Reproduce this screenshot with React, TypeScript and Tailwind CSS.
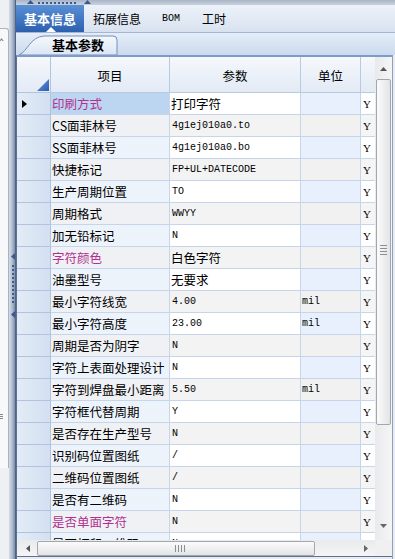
import React from "react";
import type { FC } from "react";

type Row = { name: string; value: string; unit?: string; hot?: boolean };

// 参数表的数据
const rows: Row[] = [
  { name: "印刷方式", value: "打印字符", hot: true },
  { name: "CS面菲林号", value: "4g1ej010a0.to" },
  { name: "SS面菲林号", value: "4g1ej010a0.bo" },
  { name: "快捷标记", value: "FP+UL+DATECODE" },
  { name: "生产周期位置", value: "TO" },
  { name: "周期格式", value: "WWYY" },
  { name: "加无铅标记", value: "N" },
  { name: "字符颜色", value: "白色字符", hot: true },
  { name: "油墨型号", value: "无要求" },
  { name: "最小字符线宽", value: "4.00", unit: "mil" },
  { name: "最小字符高度", value: "23.00", unit: "mil" },
  { name: "周期是否为阴字", value: "N" },
  { name: "字符上表面处理设计", value: "N" },
  { name: "字符到焊盘最小距离", value: "5.50", unit: "mil" },
  { name: "字符框代替周期", value: "Y" },
  { name: "是否存在生产型号", value: "N" },
  { name: "识别码位置图纸", value: "/" },
  { name: "二维码位置图纸", value: "/" },
  { name: "是否有二维码", value: "N" },
  { name: "是否单面字符", value: "N", hot: true },
  { name: "是否打印二维码", value: "N" },
];

const isAscii = (s: string) => /^[\x00-\x7f]+$/.test(s);

const Tri: FC<{ dir: "up" | "down" | "left" | "right"; color?: string }> = ({
  dir,
  color = "#555",
}) => {
  const d = {
    up: "M0 4 L3.5 0 L7 4 Z",
    down: "M0 0 L7 0 L3.5 4 Z",
    left: "M4 0 L4 7 L0 3.5 Z",
    right: "M0 0 L4 3.5 L0 7 Z",
  }[dir];
  const w = dir === "up" || dir === "down" ? 7 : 4;
  const h = dir === "up" || dir === "down" ? 4 : 7;
  return (
    <svg width={w} height={h} viewBox={`0 0 ${w} ${h}`}>
      <path d={d} fill={color} />
    </svg>
  );
};

const GridRow: FC<{ row: Row; index: number }> = ({ row, index }) => {
  const odd = index % 2 === 0;
  const selected = index === 0;
  return (
    <div className="flex h-[22px] shrink-0">
      <div className="w-[34px] shrink-0 bg-gradient-to-r from-[#e3ecf7] to-[#d3e0f1] border-r border-b border-[#b2c4dd] flex items-center pl-[5px]">
        {selected && (
          <svg width="5" height="8" viewBox="0 0 5 8">
            <path d="M0 0 L5 4 L0 8 Z" fill="#000" />
          </svg>
        )}
      </div>
      <div
        className={`w-[119px] shrink-0 border-r border-b border-[#c6d5ea] flex items-center pl-[1px] pt-[1px] text-[12.5px] leading-none whitespace-nowrap overflow-hidden ${
          selected ? "bg-[#bcd5f1]" : odd ? "bg-[#edf3fb]" : "bg-[#eff1f4]"
        } ${row.hot ? "text-[#b2308f]" : "text-black"}`}
      >
        {row.name}
      </div>
      <div
        className={`w-[131px] shrink-0 border-r border-b border-[#c6d5ea] flex items-center pl-[1px] pt-[1px] leading-none whitespace-nowrap overflow-hidden text-black ${
          odd ? "bg-white" : "bg-[#f3f3f3]"
        } ${
          isAscii(row.value)
            ? "font-['Liberation_Mono',monospace] text-[10px] pl-[2px]"
            : "text-[12.5px]"
        }`}
      >
        {row.value}
      </div>
      <div
        className={`w-[60px] shrink-0 border-r border-b border-[#c6d5ea] flex items-center pl-[1px] pt-[1px] font-['Liberation_Mono',monospace] text-[10px] leading-none ${
          odd ? "bg-[#e7f0fc]" : "bg-[#f1f1f1]"
        }`}
      >
        {row.unit}
      </div>
      <div
        className={`w-[14px] shrink-0 border-b border-[#c6d5ea] flex items-center pl-[2px] pt-[1px] font-['Liberation_Serif',serif] text-[11px] leading-none ${
          odd ? "bg-white" : "bg-[#f5f5f5]"
        }`}
      >
        Y
      </div>
    </div>
  );
};

export default function App() {
  return (
    <div className="w-[395px] h-[559px] flex overflow-hidden bg-[#eef1f5] font-['Noto_Sans_CJK_SC','Noto_Sans',sans-serif] select-none">
      {/* 左侧折叠面板 */}
      <div className="w-[9px] shrink-0 flex flex-col bg-[#eef0f3]">
        <div className="h-[28px]" />
        <div className="h-[440px] bg-[#f7f8fa] border-t border-r border-[#a9b3c2] rounded-tr-[3px] relative">
          <div className="absolute left-0 top-[10px] w-[3px] h-[3px] border-t border-r border-[#777] rotate-[-45deg]" />
          <div className="absolute left-0 top-[385px] flex flex-col gap-[1px]">
            <div className="w-[3px] h-px bg-[#888]" />
            <div className="w-[3px] h-px bg-[#888]" />
            <div className="w-[3px] h-px bg-[#888]" />
          </div>
        </div>
        <div className="flex-1" />
      </div>

      {/* 竖向分隔条 */}
      <div className="w-[7px] shrink-0 relative bg-gradient-to-r from-[#d5dce7] via-[#b4c0d2] to-[#7b8daa] border-r border-[#4f6486]">
        <div className="absolute left-[2px] top-[253px]">
          <Tri dir="left" color="#3b5a8c" />
        </div>
        <div className="absolute left-[3px] top-[265px] flex flex-col gap-[2px]">
          {Array.from({ length: 10 }).map((_, i) => (
            <div key={i} className="w-[2px] h-[2px] bg-[#3b5a8c]" />
          ))}
        </div>
        <div className="absolute left-[2px] top-[311px]">
          <Tri dir="left" color="#3b5a8c" />
        </div>
      </div>

      {/* 主区域 */}
      <div className="flex-1 flex flex-col min-w-0">
        {/* 顶部分隔条 */}
        <div className="h-[5px] shrink-0 relative bg-gradient-to-b from-[#a9b5c7] to-[#c9d2de]">
          <div className="absolute left-[11px] top-0">
            <Tri dir="up" color="#3b5a8c" />
          </div>
          <div className="absolute left-[22px] top-[2px] flex gap-[2px]">
            {Array.from({ length: 10 }).map((_, i) => (
              <div key={i} className="w-[2px] h-[2px] bg-[#3b5a8c]" />
            ))}
          </div>
          <div className="absolute left-[68px] top-0">
            <Tri dir="up" color="#3b5a8c" />
          </div>
        </div>

        {/* 页签栏 */}
        <div className="h-[28px] shrink-0 flex items-stretch bg-gradient-to-b from-[#edf2f9] to-[#d8e2ef] border-b border-[#a3b7d4]">
          <div className="w-[68px] relative flex items-center justify-center bg-gradient-to-b from-[#5a90d6] to-[#2c60ae] text-white text-[13px] font-bold">
            基本信息
            <div className="absolute bottom-0 left-[30px] w-0 h-0 border-l-[5px] border-r-[5px] border-b-[5px] border-l-transparent border-r-transparent border-b-white" />
          </div>
          <div className="pl-[9px] flex items-center text-[12px] text-black">拓展信息</div>
          <div className="pl-[21px] flex items-center font-['Liberation_Mono',monospace] text-[10px] text-black">BOM</div>
          <div className="pl-[22px] flex items-center text-[12px] text-black">工时</div>
        </div>

        {/* 子页签 */}
        <div className="h-[22px] shrink-0 relative bg-gradient-to-b from-[#e5edf8] to-[#cbdaee]">
          <svg className="absolute left-0 top-0" width="105" height="22" viewBox="0 0 105 22">
            <defs>
              <linearGradient id="tabg" x1="0" y1="0" x2="0" y2="1">
                <stop offset="0" stopColor="#f6f9fd" />
                <stop offset="1" stopColor="#dae5f4" />
              </linearGradient>
            </defs>
            <path
              d="M3 22 C12 18 14 4 28 3 L97 3 Q101 3 101 7 L101 22 Z"
              fill="url(#tabg)"
              stroke="#7390bd"
              strokeWidth="1"
            />
          </svg>
          <div className="absolute left-[36px] top-[2px] h-[20px] flex items-center text-[13px] font-bold text-black">
            基本参数
          </div>
        </div>

        {/* 表格 */}
        <div className="flex-1 flex min-h-0">
          <div className="flex-1 flex flex-col min-w-0 border-l border-t-2 border-[#7f9bc8] border-l-[#5c7196]">
            <div className="flex-1 flex min-h-0">
              <div className="flex-1 flex flex-col overflow-hidden">
                {/* 表头 */}
                <div className="flex h-[36px] shrink-0 bg-gradient-to-b from-[#f5f8fc] to-[#e2eaf5] text-[12.5px] text-black">
                  <div className="w-[34px] shrink-0 border-r border-b border-[#b2c4dd] flex items-end justify-end pr-[1px] pb-[1px]">
                    <svg width="12" height="12" viewBox="0 0 12 12">
                      <defs>
                        <linearGradient id="cg" x1="0" y1="0" x2="1" y2="1">
                          <stop offset="0" stopColor="#6c9be0" />
                          <stop offset="1" stopColor="#2a5cae" />
                        </linearGradient>
                      </defs>
                      <path d="M12 0 L12 12 L0 12 Z" fill="url(#cg)" />
                    </svg>
                  </div>
                  <div className="w-[119px] shrink-0 border-r border-b border-[#b9c9df] flex items-center justify-center pt-[3px]">项目</div>
                  <div className="w-[131px] shrink-0 border-r border-b border-[#b9c9df] flex items-center justify-center pt-[3px]">参数</div>
                  <div className="w-[60px] shrink-0 border-r border-b border-[#b9c9df] flex items-center justify-center pt-[3px]">单位</div>
                  <div className="w-[14px] shrink-0 border-b border-[#b9c9df]" />
                </div>
                {rows.map((r, i) => (
                  <GridRow key={r.name} row={r} index={i} />
                ))}
              </div>

              {/* 竖向滚动条 */}
              <div className="w-[17px] shrink-0 flex flex-col items-center bg-gradient-to-r from-[#e9eaec] to-[#f5f5f6]">
                <div className="h-[21px] flex items-center justify-center pt-[2px]">
                  <Tri dir="up" />
                </div>
                <div className="w-[15px] h-[346px] mt-[1px] rounded-[2px] border border-[#a2a7ae] bg-gradient-to-r from-[#fbfbfb] to-[#e3e4e6] flex flex-col items-center justify-center gap-[2px] pb-[4px]">
                  <div className="w-[7px] h-px bg-[#8a8f96]" />
                  <div className="w-[7px] h-px bg-[#8a8f96]" />
                  <div className="w-[7px] h-px bg-[#8a8f96]" />
                  <div className="w-[7px] h-px bg-[#8a8f96]" />
                </div>
                <div className="flex-1" />
                <div className="h-[16px] flex items-start justify-center">
                  <Tri dir="down" color="#666" />
                </div>
              </div>
            </div>

            {/* 横向滚动条 */}
            <div className="h-[16px] shrink-0 flex bg-gradient-to-b from-[#e9eaec] to-[#f5f5f6]">
              <div className="w-[358px] shrink-0 flex items-center">
                <div className="w-[20px] flex justify-center pl-[2px]">
                  <Tri dir="left" />
                </div>
                <div className="w-[278px] h-[15px] rounded-[2px] border border-[#a2a7ae] bg-gradient-to-b from-[#fbfbfb] to-[#e3e4e6] flex items-center justify-center gap-[2px] pl-[8px]">
                  <div className="w-px h-[7px] bg-[#8a8f96]" />
                  <div className="w-px h-[7px] bg-[#8a8f96]" />
                  <div className="w-px h-[7px] bg-[#8a8f96]" />
                  <div className="w-px h-[7px] bg-[#8a8f96]" />
                </div>
                <div className="flex-1 flex justify-end pr-[7px]">
                  <Tri dir="right" color="#666" />
                </div>
              </div>
              <div className="w-[17px] shrink-0 bg-[#f0f0f1]" />
            </div>
            <div className="h-[3px] shrink-0 border-t border-[#5c7196] bg-[#e8ecf2]" />
          </div>
          <div className="w-[3px] shrink-0 border-l border-[#8ea0bb] bg-[#e9edf3]" />
        </div>
      </div>
    </div>
  );
}
